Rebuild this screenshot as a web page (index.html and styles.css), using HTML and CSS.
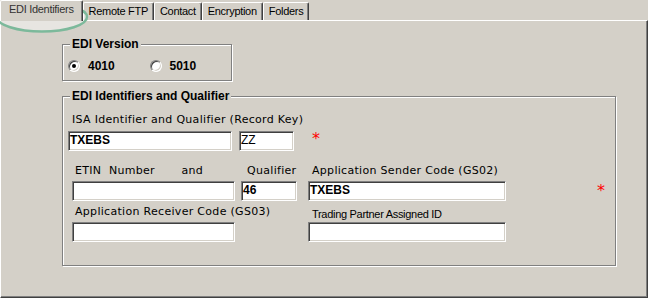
FILE: index.html
```html
<!DOCTYPE html>
<html>
<head>
<meta charset="utf-8">
<link rel="stylesheet" href="styles.css">
</head>
<body>
<div class="window">
  <div class="tabs">
    <div class="tab tab--active">EDI Identifiers</div>
    <div class="tab">Remote FTP</div>
    <div class="tab">Contact</div>
    <div class="tab">Encryption</div>
    <div class="tab">Folders</div>
  </div>
  <div class="panel">
    <fieldset class="group group--version">
      <legend class="group__title">EDI Version</legend>
      <div class="radios">
        <div class="radio"><span class="radio__box radio__box--checked"></span>4010</div>
        <div class="radio"><span class="radio__box"></span>5010</div>
      </div>
    </fieldset>
    <fieldset class="group group--ids">
      <legend class="group__title">EDI Identifiers and Qualifier</legend>
      <div class="label label--isa">ISA Identifier and Qualifier (Record Key)</div>
      <div class="row">
        <div class="input input--isa">TXEBS</div>
        <div class="input input--zz">ZZ</div>
        <span class="req">*</span>
      </div>
      <div class="grid">
        <div class="label label--etin">ETIN  Number       and</div>
        <div class="label label--qual">Qualifier</div>
        <div class="label label--right">Application Sender Code (GS02)</div>
        <div></div>

        <div class="input input--left"></div>
        <div class="input input--qual">46</div>
        <div class="input input--right">TXEBS</div>
        <span class="req req--sender">*</span>

        <div class="label label--receiver">Application Receiver Code (GS03)</div>
        <div></div>
        <div class="label label--trading">Trading Partner Assigned ID</div>
        <div></div>

        <div class="input input--left"></div>
        <div></div>
        <div class="input input--right"></div>
        <div></div>
      </div>
    </fieldset>
  </div>
  <svg class="highlight" width="100" height="40" viewBox="0 0 100 40">
    <ellipse cx="42" cy="17" rx="45" ry="14.5" fill="rgba(255,255,255,0.45)" stroke="#7cb99b" stroke-width="2.5"/>
  </svg>
</div>
</body>
</html>
```

FILE: styles.css
```css
* {
  box-sizing: border-box;
}

body {
  margin: 0;
  background: #d4d0c8;
  font-family: "Liberation Sans", Arial, sans-serif;
  font-size: 11px;
  color: #000;
}

.window {
  position: relative;
  width: 648px;
  height: 298px;
  background: #d4d0c8;
  overflow: hidden;
}

/* Tabs */
.tabs {
  display: flex;
  align-items: flex-end;
  height: 20px;
}

.tab {
  height: 18px;
  padding: 0 5px;
  line-height: 16px;
  letter-spacing: -0.3px;
  white-space: nowrap;
  background: #d4d0c8;
  border-top: 1px solid #fff;
  border-left: 1px solid #fff;
  border-right: 1px solid #404040;
  border-radius: 2px 2px 0 0;
  box-shadow: inset -1px 0 0 #808080;
}

.tab--active {
  position: relative;
  z-index: 1;
  height: 21px;
  margin-bottom: -1px;
  padding: 0 8px;
  color: #333;
}

/* Panel */
.panel {
  height: 278px;
  padding: 16px 0 0 61px;
  border-top: 1px solid #fff;
  border-left: 1px solid #fff;
  border-right: 1px solid #404040;
  border-bottom: 1px solid #404040;
  box-shadow: inset -1px -1px 0 #808080;
}

/* Group boxes */
.group {
  margin: 0;
  padding: 0;
  min-width: 0;
  border: 1px solid #808080;
  box-shadow: 1px 1px 0 #fff, inset 1px 1px 0 #fff;
}

.group__title {
  margin-left: 7px;
  padding: 0 2px;
  font: bold 12px/14px "Liberation Sans", Arial, sans-serif;
  background: #d4d0c8;
}

.group--version {
  width: 170px;
}

.group--ids {
  width: 554px;
  margin-top: 8px;
}

/* Radios */
.radios {
  display: flex;
  padding: 7px 0 6px 5px;
}

.radio {
  display: flex;
  align-items: center;
  width: 87px;
  height: 16px;
  font: bold 12px/16px "Liberation Sans", Arial, sans-serif;
}

.radio__box {
  display: flex;
  align-items: center;
  justify-content: center;
  width: 12px;
  height: 12px;
  margin-right: 8px;
  border-radius: 50%;
  background: #fff;
  border: 1px solid;
  border-color: #808080 #fff #fff #808080;
  box-shadow: inset 1px 1px 0 #404040, inset -1px -1px 0 #d4d0c8;
}

.radio__box--checked::after {
  content: "";
  width: 4px;
  height: 4px;
  border-radius: 50%;
  background: #000;
}

/* Labels */
.label {
  font: 11px/13px "DejaVu Sans", sans-serif;
  letter-spacing: 0.3px;
  white-space: pre;
}

.label--isa {
  margin: 10px 0 0 9px;
}

.label--etin {
  padding-left: 3px;
}

.label--qual {
  padding-left: 6px;
}

.label--right {
  padding-left: 4px;
}

.label--receiver {
  margin-top: 4px;
  padding-left: 3px;
}

.label--trading {
  margin-top: 7px;
  padding-left: 4px;
  font: 11px/13px "Liberation Sans", Arial, sans-serif;
  letter-spacing: -0.3px;
}

/* Inputs */
.input {
  height: 20px;
  padding: 0 1px;
  background: #fff;
  border: 1px solid;
  border-color: #808080 #fff #fff #808080;
  box-shadow: inset 1px 1px 0 #404040, inset -1px -1px 0 #d4d0c8;
  font: bold 12px/16px "Liberation Sans", Arial, sans-serif;
  white-space: nowrap;
  overflow: hidden;
}

.row {
  display: flex;
  align-items: flex-start;
  margin-top: 5px;
  padding-left: 5px;
}

.input--isa {
  width: 164px;
}

.input--zz {
  width: 55px;
  margin-left: 7px;
  font-weight: normal;
}

.input--left {
  width: 163px;
}

.input--qual {
  width: 56px;
}

.input--right {
  width: 198px;
}

.req {
  margin-left: 18px;
  margin-top: 0;
  color: #f00;
  font: 16px/16px "DejaVu Sans", sans-serif;
}

.req--sender {
  margin-left: 0;
  margin-top: 2px;
}

.grid {
  display: grid;
  grid-template-columns: 169px 67px 289px auto;
  grid-template-rows: 17px 20px 21px 20px;
  align-items: start;
  margin-top: 13px;
  padding: 0 0 23px 9px;
}

/* Annotation highlight over the active tab */
.highlight {
  position: absolute;
  left: 0;
  top: 0;
  pointer-events: none;
}
```
